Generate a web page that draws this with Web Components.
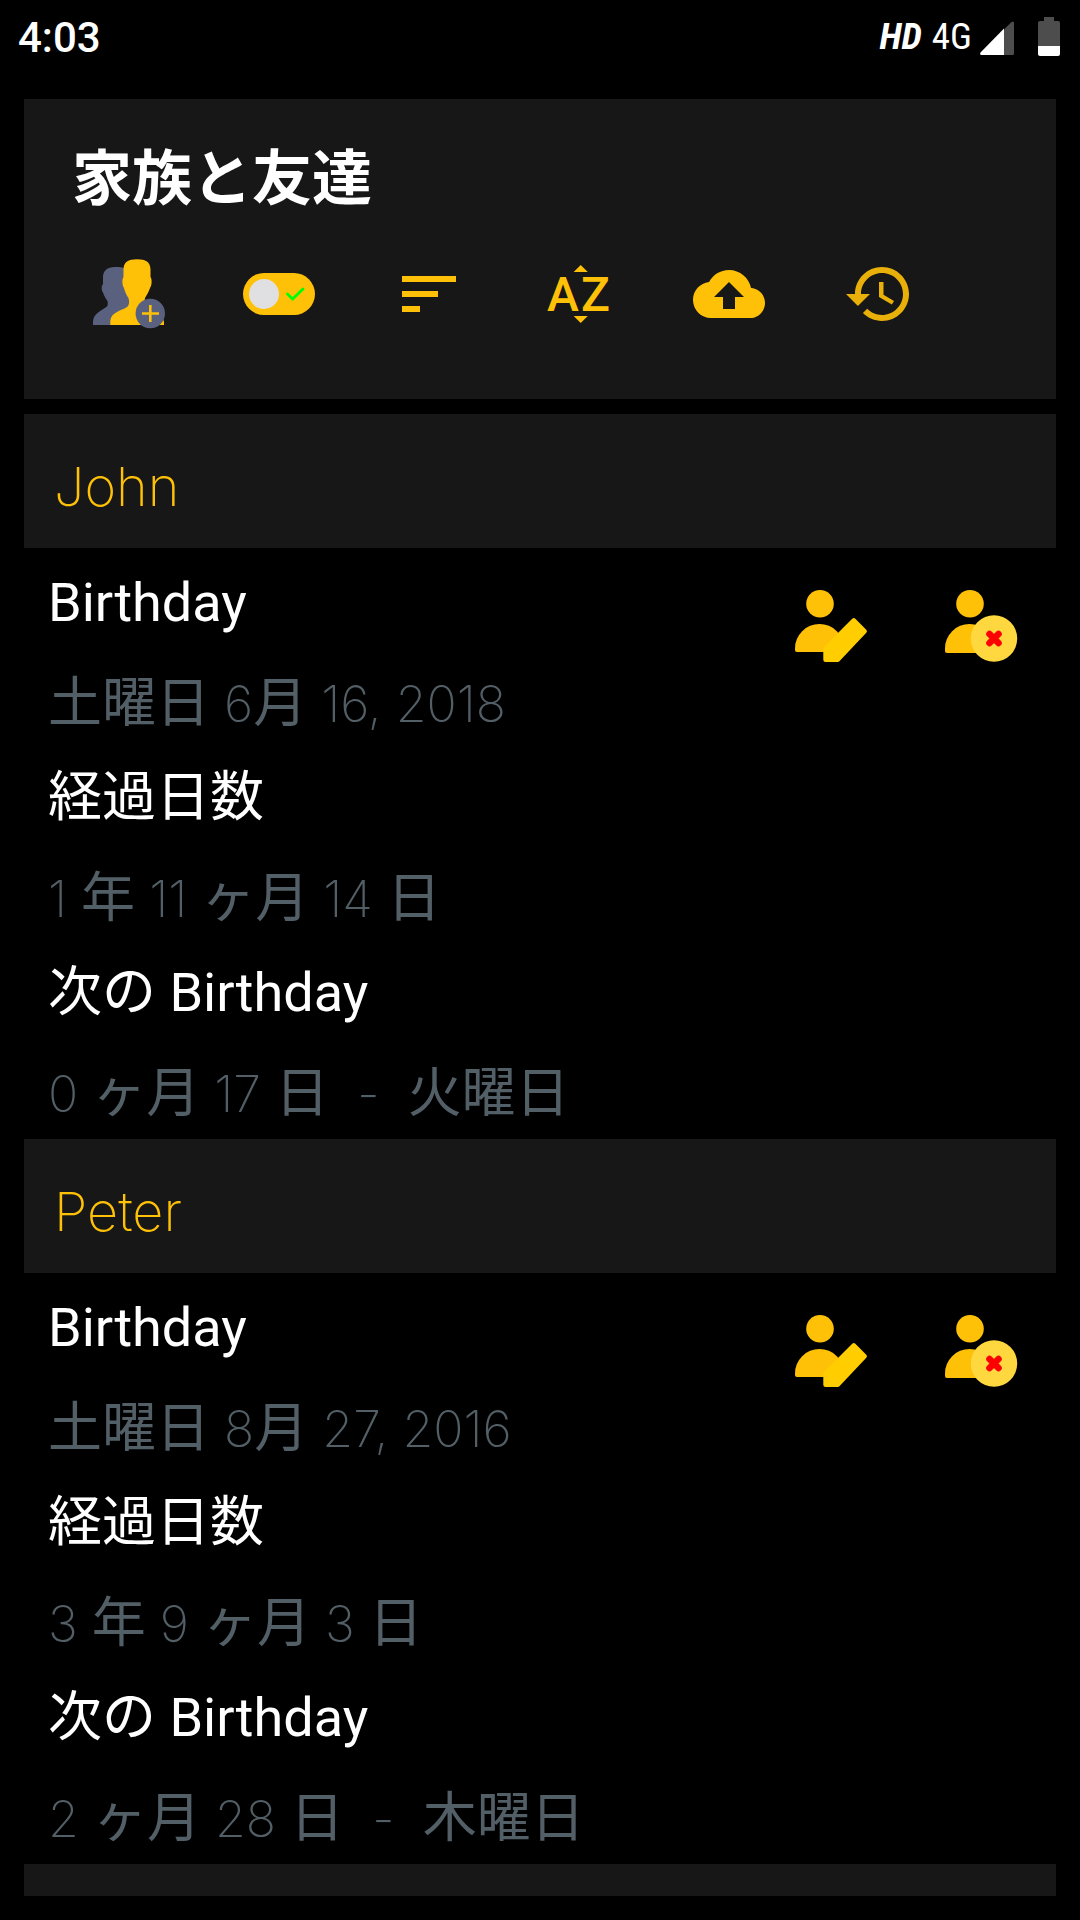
<!DOCTYPE html>
<html lang="ja">
<head>
<meta charset="utf-8">
<meta name="viewport" content="width=device-width, initial-scale=1">
<title>家族と友達</title>
<style>
  html, body { margin: 0; background: #000; }
  body { font-family: Roboto, "Noto Sans CJK JP", sans-serif; color: #fff; }
</style>
</head>
<body>
<birthday-app>
  <status-bar slot="status" time="4:03"></status-bar>
  <tool-card heading="家族と友達"></tool-card>
  <person-card name="John">
    <fact-row label="Birthday">土曜日 6月 16, 2018</fact-row>
    <fact-row label="経過日数">1 年 11 ヶ月 14 日</fact-row>
    <fact-row label="次の Birthday">0 ヶ月 17 日&nbsp; -&nbsp; 火曜日</fact-row>
  </person-card>
  <person-card name="Peter">
    <fact-row label="Birthday">土曜日 8月 27, 2016</fact-row>
    <fact-row label="経過日数">3 年 9 ヶ月 3 日</fact-row>
    <fact-row label="次の Birthday">2 ヶ月 28 日&nbsp; -&nbsp; 木曜日</fact-row>
  </person-card>
  <person-card name=""></person-card>
</birthday-app>

<script>
const define = (name, render, after) => customElements.define(name, class extends HTMLElement {
  connectedCallback() {
    if (this.shadowRoot) return;
    this.attachShadow({ mode: 'open' }).innerHTML = render(this);
    if (after) after(this, this.shadowRoot);
  }
});

const BUTTON_CSS = `
  button { display: block; flex: none; width: 72px; height: 72px; margin: 0; padding: 0; border: 0; background: none; color: inherit; cursor: pointer; }
  svg { display: block; width: 72px; height: 72px; overflow: visible; }
`;

define('birthday-app', () => `
  <style>
    :host { display: flex; flex-direction: column; box-sizing: border-box; height: 100vh; padding-bottom: 24px; background: #000; overflow: hidden; }
    main { flex: 1; min-height: 0; margin: 24px 24px 0; overflow: hidden; }
  </style>
  <slot name="status"></slot>
  <main><slot></slot></main>
`);

define('status-bar', el => `
  <style>
    :host { display: flex; align-items: center; justify-content: space-between; box-sizing: border-box; height: 75px; padding: 0 20px 2px 18px; }
    .time { font-size: 42px; line-height: 72px; font-weight: 500; padding-top: 2px; }
    .signals { display: flex; align-items: center; line-height: 72px; }
    .hd { font: italic 700 37px/72px "Roboto Condensed", Roboto, sans-serif; }
    .net { margin-left: 10px; font: 400 37px/72px "Roboto Condensed", Roboto, sans-serif; }
    svg { display: block; height: 40px; }
    .cell { margin-left: 8px; }
    .battery { margin-left: 24px; }
  </style>
  <span class="time">${el.getAttribute('time')}</span>
  <div class="signals">
    <span class="hd">HD</span><span class="net">4G</span>
    <svg class="cell" width="34" height="40" viewBox="0 0 34 40" aria-hidden="true">
      <path d="M24 12.500L31.500 5Q34 3.500 34 6V36.500Q34 38 32.500 38H24Z" fill="#4d4d4d"/>
      <path d="M24 11.500V38H1.500Q-.5 38 .5 35.500Z" fill="#fff"/>
    </svg>
    <svg class="battery" width="22" height="40" viewBox="0 0 22 40" aria-hidden="true">
      <path d="M6 0H16V4H20Q22 4 22 6V29H0V6Q0 4 2 4H6Z" fill="#4d4d4d"/>
      <path d="M0 29H22V37Q22 39 20 39H2Q0 39 0 37Z" fill="#fff"/>
    </svg>
  </div>
`);

define('tool-card', el => `
  <style>
    :host { display: block; margin-bottom: 15px; padding: 35px 48px 69px; background: #171717; color: #ffc107; }
    h1 { margin: 0 0 44px; color: #fff; font: 700 60px/80px "Noto Sans CJK JP", sans-serif; }
    .tools { display: flex; gap: 78px; padding-left: 21px; }
    label { display: grid; flex: none; width: 72px; height: 72px; cursor: pointer; }
    label > * { grid-area: 1 / 1; }
    input { appearance: none; width: 72px; height: 72px; margin: 0; }
    text { font: 500 48px Roboto, sans-serif; }
    ${BUTTON_CSS}
  </style>
  <h1>${el.getAttribute('heading')}</h1>
  <div class="tools" role="toolbar">
    <button type="button" aria-label="追加">
      <svg viewBox="0 0 72 72">
        <path fill="#59617f" d="M22 9C14 9 10 13 10 19V26C8 28 8.500 33 10 34.500C11 38 13 41 14.500 43C15 47 15 48 12.500 49.500C8 53 0 56 0 64V67H20L36 52V12C32 9.500 27 9 22 9Z"/>
        <path fill="#ffc107" d="M44 1.300C35 1.300 31 4 30.500 11V19C28.800 21 29.300 28 30.800 29.500C32 34 34 38 35.500 40C36.500 44 36.500 47 34 49C28 53 18 54 17.300 63V67H71V64C70 55 58 53 53 48C51.500 45 51.500 43 52 40C54 37 56 33 57.200 29.500C58.800 28 59.300 21 57.500 19V11C57 4 53 1.300 44 1.300Z"/>
        <circle cx="57.300" cy="55.500" r="14.700" fill="#59617f"/>
        <path d="M49 55.500H66M57.300 47V64" stroke="#ffc107" stroke-width="2.600"/>
      </svg>
    </button>
    <label>
      <svg viewBox="0 0 72 72" aria-hidden="true">
        <rect y="15" width="72" height="42" rx="21" fill="#ffc107"/>
        <circle cx="21" cy="36" r="15" fill="#e0e0e2"/>
        <path d="M44.500 36L49.600 41L60 31" fill="none" stroke="#0f0" stroke-width="2.800" stroke-linecap="round"/>
      </svg>
      <input type="checkbox" role="switch" aria-label="有効" checked>
    </label>
    <button type="button" aria-label="並べ替え">
      <svg viewBox="0 0 24 24" fill="currentColor"><path d="M3 18h6v-2H3v2zM3 6v2h18V6H3zm0 7h12v-2H3v2z"/></svg>
    </button>
    <button type="button" aria-label="名前順">
      <svg viewBox="0 0 72 72" fill="currentColor">
        <path d="M44.800 14H30.700L37.700 7ZM30.700 58H44.800L37.700 65Z"/>
        <text x="4" y="53">A</text><text x="38" y="53">Z</text>
      </svg>
    </button>
    <button type="button" aria-label="アップロード">
      <svg viewBox="0 0 24 24" fill="currentColor"><path d="M19.350 10.040C18.670 6.590 15.640 4 12 4 9.110 4 6.600 5.640 5.350 8.040 2.340 8.360 0 10.910 0 14c0 3.310 2.690 6 6 6h13c2.760 0 5-2.240 5-5 0-2.640-2.050-4.780-4.650-4.960zM14 13v4h-4v-4H7l5-5 5 5h-3z"/></svg>
    </button>
    <button type="button" aria-label="履歴">
      <svg viewBox="0 0 24 24" fill="currentColor" opacity=".9"><path d="M13 3c-4.970 0-9 4.030-9 9H1l3.890 3.890.070.140L9 12H6c0-3.870 3.130-7 7-7s7 3.130 7 7-3.130 7-7 7c-1.930 0-3.680-.790-4.940-2.060l-1.420 1.420C8.270 19.990 10.510 21 13 21c4.970 0 9-4.030 9-9s-4.030-9-9-9zm-1 5v5l4.280 2.540.720-1.210-3.500-2.080V8H12z"/></svg>
    </button>
  </div>
`);

define('person-card', el => `
  <style>
    :host { display: block; }
    h2 { box-sizing: border-box; min-height: 134px; margin: 0; padding: 32px 30px 20px; background: #171717; color: #ffc107; font: 200 54px/82px Inter, "Noto Sans CJK JP", sans-serif; }
    .body { display: flex; align-items: flex-start; padding: 6px 39px 0 24px; }
    .facts { flex: 1; min-width: 0; }
    .actions { display: flex; gap: 78px; padding-top: 36px; }
    ${BUTTON_CSS}
  </style>
  <h2>${el.getAttribute('name')}</h2>
  <div class="body">
    <div class="facts"><slot></slot></div>
    <div class="actions">
      <button type="button" aria-label="編集">
        <svg viewBox="0 0 72 72">
          <circle cx="25" cy="13.800" r="13.800" fill="#ffc107"/>
          <path d="M0 60V58.500A24.500 24.500 0 0 1 49 58.500V62H2Q0 62 0 60Z" fill="#ffc107"/>
          <path d="M58.800 30.300L69.700 41.200L42.800 69.700H30.500V58.500Z" fill="#ffcd00" stroke="#ffcd00" stroke-width="4.400" stroke-linejoin="round"/>
        </svg>
      </button>
      <button type="button" aria-label="削除">
        <svg viewBox="0 0 72 72">
          <circle cx="25" cy="13.800" r="13.800" fill="#ffc107"/>
          <path d="M0 61V58.500A24.500 24.500 0 0 1 49 58.500V63H2Q0 63 0 61Z" fill="#ffc107"/>
          <circle cx="49" cy="48.500" r="23.200" fill="#ffd840"/>
          <path d="M44.500 44L53.500 53M53.500 44L44.500 53" stroke="#f00" stroke-width="6.600" stroke-linecap="round"/>
        </svg>
      </button>
    </div>
  </div>
`);

/* One label with its value; Latin runs of the value are set in the thin weight. */
define('fact-row', el => `
  <style>
    :host { display: block; font-size: 54px; white-space: nowrap; }
    dl, dt, dd { margin: 0; }
    dt { line-height: 98px; font-family: Roboto, "Noto Sans CJK JP", sans-serif; }
    dd { box-sizing: border-box; height: 97px; padding-top: 1px; line-height: 97px; font-family: Lato, "Noto Sans CJK JP", sans-serif; color: #535f66; white-space: pre; }
    .thin { font: 200 50px/1 Inter, sans-serif; }
  </style>
  <dl><dt>${el.getAttribute('label')}</dt><dd></dd></dl>
`, (el, root) => {
  const dd = root.querySelector('dd');
  for (const run of el.textContent.match(/[\x20-\x7e\xa0]+|[^\x20-\x7e\xa0]+/g) || []) {
    const part = document.createElement('span');
    part.textContent = run;
    if (/^[\x20-\x7e\xa0]/.test(run)) part.className = 'thin';
    dd.append(part);
  }
});
</script>
</body>
</html>
